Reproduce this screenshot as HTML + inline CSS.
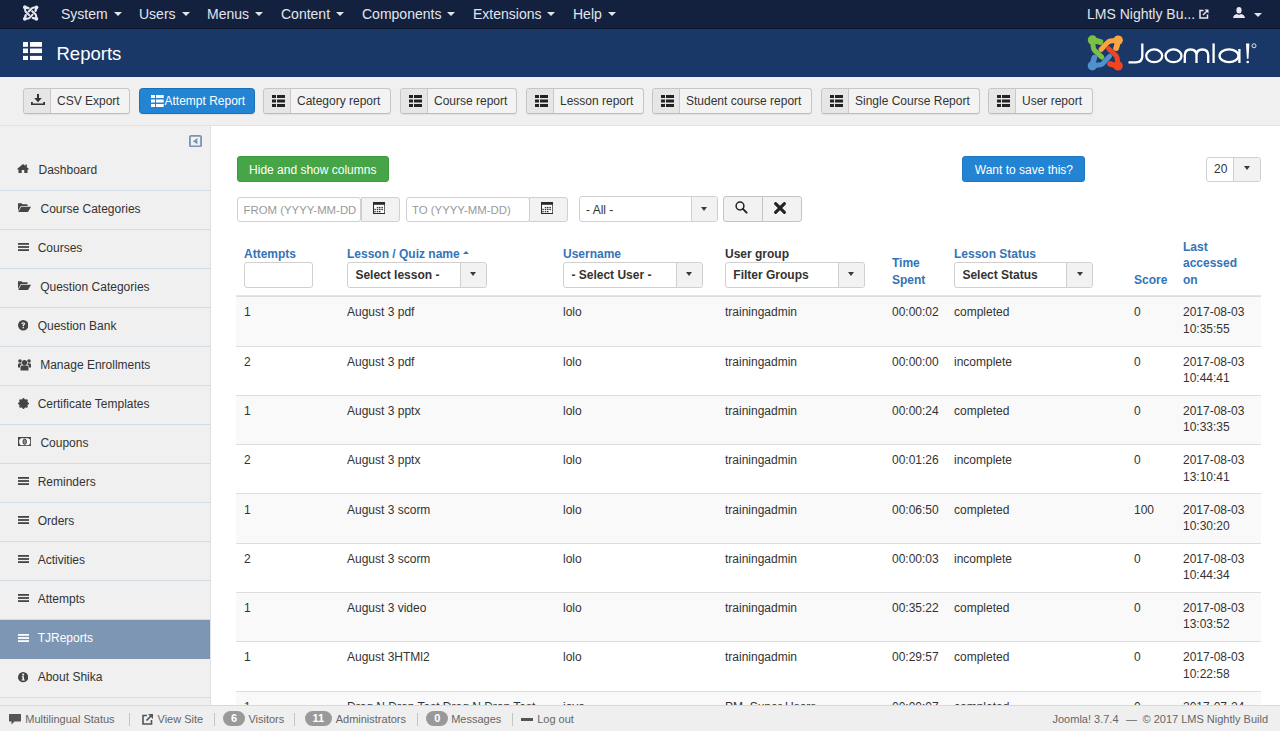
<!DOCTYPE html>
<html><head><meta charset="utf-8">
<style>
*{box-sizing:border-box;}
html,body{margin:0;padding:0;width:1280px;height:731px;overflow:hidden;background:#fff;}
body{font-family:"Liberation Sans",sans-serif;font-size:12px;color:#333;position:relative;}
.abs{position:absolute;}
/* navbar */
#nav{position:absolute;left:0;top:0;width:1280px;height:29px;background:#13213f;border-bottom:1px solid #0d1528;}
#nav .it{position:absolute;top:6px;font-size:14px;color:#e2e5eb;line-height:16px;white-space:nowrap;}
.caret{display:inline-block;width:0;height:0;border-top:4px solid #e2e5eb;border-left:4px solid transparent;border-right:4px solid transparent;vertical-align:middle;margin-left:6px;margin-top:-2px;}
/* header */
#hdr{position:absolute;left:0;top:29px;width:1280px;height:48px;background:#1a3867;}
#hdr .title{position:absolute;left:56.5px;top:13.5px;font-size:18.5px;color:#fff;line-height:22px;}
/* subhead */
#sub{position:absolute;left:0;top:77px;width:1280px;height:49px;background:#f0f0f0;border-bottom:1px solid #e2e2e2;}
.tb{position:absolute;top:11px;height:25.5px;border:1px solid #c6c6c6;border-bottom-color:#bdbdbd;border-radius:3.5px;background:#f3f3f3;font-size:12px;color:#333;line-height:23px;white-space:nowrap;box-shadow:0 1px 1px rgba(0,0,0,.06);}
.tb .ic{position:absolute;left:0;top:0;width:27px;height:23.5px;background:#e6e6e6;border-right:1px solid #c9c9c9;border-radius:3px 0 0 3px;}
.tb .tx{position:absolute;left:33px;top:1px;}
/* sidebar */
#side{position:absolute;left:0;top:126px;width:211px;height:579px;background:#f0f0f0;border-right:1px solid #e0e0e0;}
.si{position:absolute;left:0;width:210px;height:39px;border-bottom:1px solid #d3dbe4;font-size:12px;color:#333;line-height:14px;}
.si .t{position:absolute;top:10.5px;}
.si.act{background:#7d96b4;color:#fff;border-bottom-color:#7d96b4;}
/* main */
.btn{position:absolute;height:26px;border-radius:3px;font-size:12px;line-height:26px;text-align:center;color:#fff;}
.inp{position:absolute;height:27px;border:1px solid #d0d0d0;border-radius:3px;background:#fff;font-size:12px;color:#999;line-height:25px;}
.addon{position:absolute;top:-1px;height:27px;width:40px;border:1px solid #d0d0d0;background:#f2f2f2;border-radius:0 3px 3px 0;}
/* table */
.th{position:absolute;font-weight:bold;color:#3374b8;font-size:12px;line-height:16.6px;white-space:nowrap;margin-top:0.7px;}
.sel{position:absolute;top:262px;height:26px;border:1px solid #d0d0d0;border-radius:3px;background:#fff;font-weight:bold;color:#333;font-size:12px;line-height:24px;}
.sel .t{position:absolute;left:7px;top:0;}
.sel .dd{position:absolute;right:0;top:0;width:26px;height:24px;background:#f2f2f2;border-left:1px solid #d0d0d0;border-radius:0 3px 3px 0;}
.dcaret{position:absolute;left:9.6px;top:9.2px;width:0;height:0;border-top:4.1px solid #3a3a3a;border-left:3.4px solid transparent;border-right:3.4px solid transparent;}
.row{position:absolute;left:236px;width:1025px;border-top:1px solid #ddd;}
.row.odd{background:#f9f9f9;}
.c{position:absolute;top:8px;line-height:16.4px;font-size:12px;color:#333;white-space:nowrap;}
/* footer */
#foot{position:absolute;left:0;top:705px;width:1280px;height:26px;background:#efefef;border-top:1px solid #d9d9d9;font-size:11px;color:#666;line-height:24px;}
#foot .f{position:absolute;top:0.5px;white-space:nowrap;}
.badge{position:absolute;top:4.5px;background:#999;color:#fff;border-radius:8px;font-size:11px;font-weight:bold;line-height:15.7px;height:15.7px;text-align:center;}
.sep{position:absolute;top:7px;width:1px;height:12.5px;background:#c4c4c4;}
.sbtn{position:absolute;top:196px;height:26px;border:1px solid #c4c4c4;border-radius:3px 0 0 3px;background:#f2f2f2;}
.upc{display:inline-block;width:0;height:0;border-bottom:3.6px solid #3374b8;border-left:3.3px solid transparent;border-right:3.3px solid transparent;vertical-align:middle;margin-left:3.5px;margin-top:-5px;}

</style></head><body>

<div id="nav">
  <svg class="abs" style="left:0;top:0" width="60" height="28" viewBox="0 0 60 28"><path d="M24.89 7.25 L25.29 10.71 Q25.47 11.52 26.06 12.11 L29.12 14.94" fill="none" stroke="#e6e8ee" stroke-width="2.07" stroke-linecap="round" stroke-linejoin="round"/><path d="M24.89 7.25 Q27.27 7.70 28.49 8.14" fill="none" stroke="#e6e8ee" stroke-width="2.38" stroke-linecap="round"/><circle cx="24.89" cy="7.25" r="1.89" fill="#e6e8ee"/><path d="M36.45 7.29 L32.99 7.70 Q32.18 7.88 31.59 8.46 L28.76 11.52" fill="none" stroke="#e6e8ee" stroke-width="2.07" stroke-linecap="round" stroke-linejoin="round"/><path d="M36.45 7.29 Q36.00 9.68 35.55 10.89" fill="none" stroke="#e6e8ee" stroke-width="2.38" stroke-linecap="round"/><circle cx="36.45" cy="7.29" r="1.89" fill="#e6e8ee"/><path d="M36.41 18.86 L36.00 15.39 Q35.82 14.58 35.24 14.00 L32.18 11.16" fill="none" stroke="#e6e8ee" stroke-width="2.07" stroke-linecap="round" stroke-linejoin="round"/><path d="M36.41 18.86 Q34.02 18.41 32.81 17.96" fill="none" stroke="#e6e8ee" stroke-width="2.38" stroke-linecap="round"/><circle cx="36.41" cy="18.86" r="1.89" fill="#e6e8ee"/><path d="M24.84 18.81 L28.31 18.41 Q29.12 18.23 29.70 17.64 L32.54 14.58" fill="none" stroke="#e6e8ee" stroke-width="2.07" stroke-linecap="round" stroke-linejoin="round"/><path d="M24.84 18.81 Q25.29 16.43 25.74 15.21" fill="none" stroke="#e6e8ee" stroke-width="2.38" stroke-linecap="round"/><circle cx="24.84" cy="18.81" r="1.89" fill="#e6e8ee"/></svg>
  <div class="it" style="left:61px;">System<span class="caret"></span></div>
  <div class="it" style="left:139px;">Users<span class="caret"></span></div>
  <div class="it" style="left:207px;">Menus<span class="caret"></span></div>
  <div class="it" style="left:281px;">Content<span class="caret"></span></div>
  <div class="it" style="left:362px;">Components<span class="caret"></span></div>
  <div class="it" style="left:473px;">Extensions<span class="caret"></span></div>
  <div class="it" style="left:573px;">Help<span class="caret"></span></div>
  <div class="it" style="left:1087px;">LMS Nightly Bu...</div>
  <svg class="abs" style="left:1198.5px;top:8.8px" width="10" height="10" viewBox="0 0 10 10"><path d="M4.5 1.5 H1 V9 H8.5 V5.5" fill="none" stroke="#e6e8ee" stroke-width="1.5"/><path d="M5.5 0.5 H9.5 V4.5 Z" fill="#e6e8ee"/><path d="M8.5 1.5 L4 6" stroke="#e6e8ee" stroke-width="1.5"/></svg>
  <svg class="abs" style="left:1233px;top:7px" width="12" height="11" viewBox="0 0 12 11" fill="#e6e8ee"><ellipse cx="6" cy="3.3" rx="2.6" ry="3.3"/><path d="M0 11 Q0.5 7.5 4 7 L6 8 L8 7 Q11.5 7.5 12 11 Z"/></svg>
  <span class="caret abs" style="left:1254px;top:13px;margin:0;"></span>
</div>

<div id="hdr">
  <svg class="abs" style="left:23px;top:12.8px" width="19.3" height="18.7" viewBox="0 0 19.3 18.7" fill="#fff">
    <rect x="0" y="0" width="5" height="4.8"/><rect x="7" y="0" width="12.3" height="4.8"/>
    <rect x="0" y="6.5" width="5" height="4.6"/><rect x="7" y="6.5" width="12.3" height="4.6"/>
    <rect x="0" y="13.9" width="5" height="4.8"/><rect x="7" y="13.9" width="12.3" height="4.8"/>
  </svg>
  <div class="title">Reports</div>
  <svg class="abs" style="left:1080px;top:0px" width="190" height="48" viewBox="1080 29 190 48">
<path d="M1092.45 40.05 L1093.35 47.75 Q1093.75 49.55 1095.05 50.85 L1101.85 57.15" fill="none" stroke="#7ac143" stroke-width="5.00" stroke-linecap="round" stroke-linejoin="round"/><path d="M1092.45 40.05 Q1097.75 41.05 1100.45 42.05" fill="none" stroke="#7ac143" stroke-width="5.75" stroke-linecap="round"/><circle cx="1092.45" cy="40.05" r="4.70" fill="#7ac143"/><path d="M1118.15 40.15 L1110.45 41.05 Q1108.65 41.45 1107.35 42.75 L1101.05 49.55" fill="none" stroke="#f9a541" stroke-width="5.00" stroke-linecap="round" stroke-linejoin="round"/><path d="M1118.15 40.15 Q1117.15 45.45 1116.15 48.15" fill="none" stroke="#f9a541" stroke-width="5.75" stroke-linecap="round"/><circle cx="1118.15" cy="40.15" r="4.70" fill="#f9a541"/><path d="M1118.05 65.85 L1117.15 58.15 Q1116.75 56.35 1115.45 55.05 L1108.65 48.75" fill="none" stroke="#f44321" stroke-width="5.00" stroke-linecap="round" stroke-linejoin="round"/><path d="M1118.05 65.85 Q1112.75 64.85 1110.05 63.85" fill="none" stroke="#f44321" stroke-width="5.75" stroke-linecap="round"/><circle cx="1118.05" cy="65.85" r="4.70" fill="#f44321"/><path d="M1092.35 65.75 L1100.05 64.85 Q1101.85 64.45 1103.15 63.15 L1109.45 56.35" fill="none" stroke="#5091cd" stroke-width="5.00" stroke-linecap="round" stroke-linejoin="round"/><path d="M1092.35 65.75 Q1093.35 60.45 1094.35 57.75" fill="none" stroke="#5091cd" stroke-width="5.75" stroke-linecap="round"/><circle cx="1092.35" cy="65.75" r="4.70" fill="#5091cd"/>
<g fill="none" stroke="#fff" stroke-width="2.3">
<path d="M1142.3 43.5 V56 Q1142.3 62.3 1136 62.3 H1128.5"/>
<ellipse cx="1154.2" cy="55.8" rx="8" ry="6.4"/>
<ellipse cx="1173.5" cy="55.8" rx="8" ry="6.4"/>
<path d="M1184.8 63 V55.5 Q1184.8 49.5 1190.6 49.5 Q1196.5 49.5 1196.5 55.5 V63 M1196.5 55.5 Q1196.5 49.5 1202.3 49.5 Q1208.2 49.5 1208.2 55.5 V63"/>
<path d="M1213.6 43.4 V63"/>
<ellipse cx="1229" cy="55.8" rx="9.5" ry="6.4"/>
<path d="M1239.4 49 V63"/>

<circle cx="1254" cy="45.8" r="2" stroke-width="1" stroke="#dfe5ee"/>
</g>
<circle cx="1247.7" cy="62" r="1.3" fill="#fff"/><path d="M1246 43.4 H1249.4 L1248.5 58.8 H1246.9 Z" fill="#fff"/>
</svg>
</div>
<div id="sub"><div class="tb" style="left:23px;width:107px;"><div class="ic"><svg class="abs" style="left:7px;top:5px" width="14" height="12" viewBox="0 0 14 12" fill="#333"><rect x="6" y="0" width="2" height="5"/><path d="M3.2 4 H10.8 L7 8.2 Z"/><path d="M0 8 H1.8 V9.6 H12.2 V8 H14 V11 H0 Z"/></svg></div><div class="tx">CSV Export</div></div><div class="tb" style="left:139px;width:116px;background:#2384d3;border-color:#1d6fb5;color:#fff;"><svg class="abs" style="left:11px;top:5.8px" width="12.7" height="12" viewBox="0 0 12.7 12" fill="#fff"><rect x="0" y="0.00" width="4" height="3"/><rect x="5" y="0.00" width="7.699999999999999" height="3"/><rect x="0" y="4.50" width="4" height="3"/><rect x="5" y="4.50" width="7.699999999999999" height="3"/><rect x="0" y="9.00" width="4" height="3"/><rect x="5" y="9.00" width="7.699999999999999" height="3"/></svg><div class="tx" style="left:24.5px">Attempt Report</div></div><div class="tb" style="left:263px;width:128px;"><div class="ic"><svg class="abs" style="left:7.5px;top:5.8px" width="13" height="12" viewBox="0 0 13 12" fill="#222"><rect x="0" y="0.00" width="4" height="3"/><rect x="5" y="0.00" width="8" height="3"/><rect x="0" y="4.50" width="4" height="3"/><rect x="5" y="4.50" width="8" height="3"/><rect x="0" y="9.00" width="4" height="3"/><rect x="5" y="9.00" width="8" height="3"/></svg></div><div class="tx">Category report</div></div><div class="tb" style="left:400px;width:117px;"><div class="ic"><svg class="abs" style="left:7.5px;top:5.8px" width="13" height="12" viewBox="0 0 13 12" fill="#222"><rect x="0" y="0.00" width="4" height="3"/><rect x="5" y="0.00" width="8" height="3"/><rect x="0" y="4.50" width="4" height="3"/><rect x="5" y="4.50" width="8" height="3"/><rect x="0" y="9.00" width="4" height="3"/><rect x="5" y="9.00" width="8" height="3"/></svg></div><div class="tx">Course report</div></div><div class="tb" style="left:526px;width:118px;"><div class="ic"><svg class="abs" style="left:7.5px;top:5.8px" width="13" height="12" viewBox="0 0 13 12" fill="#222"><rect x="0" y="0.00" width="4" height="3"/><rect x="5" y="0.00" width="8" height="3"/><rect x="0" y="4.50" width="4" height="3"/><rect x="5" y="4.50" width="8" height="3"/><rect x="0" y="9.00" width="4" height="3"/><rect x="5" y="9.00" width="8" height="3"/></svg></div><div class="tx">Lesson report</div></div><div class="tb" style="left:652px;width:160px;"><div class="ic"><svg class="abs" style="left:7.5px;top:5.8px" width="13" height="12" viewBox="0 0 13 12" fill="#222"><rect x="0" y="0.00" width="4" height="3"/><rect x="5" y="0.00" width="8" height="3"/><rect x="0" y="4.50" width="4" height="3"/><rect x="5" y="4.50" width="8" height="3"/><rect x="0" y="9.00" width="4" height="3"/><rect x="5" y="9.00" width="8" height="3"/></svg></div><div class="tx">Student course report</div></div><div class="tb" style="left:821px;width:159px;"><div class="ic"><svg class="abs" style="left:7.5px;top:5.8px" width="13" height="12" viewBox="0 0 13 12" fill="#222"><rect x="0" y="0.00" width="4" height="3"/><rect x="5" y="0.00" width="8" height="3"/><rect x="0" y="4.50" width="4" height="3"/><rect x="5" y="4.50" width="8" height="3"/><rect x="0" y="9.00" width="4" height="3"/><rect x="5" y="9.00" width="8" height="3"/></svg></div><div class="tx">Single Course Report</div></div><div class="tb" style="left:988px;width:105px;"><div class="ic"><svg class="abs" style="left:7.5px;top:5.8px" width="13" height="12" viewBox="0 0 13 12" fill="#222"><rect x="0" y="0.00" width="4" height="3"/><rect x="5" y="0.00" width="8" height="3"/><rect x="0" y="4.50" width="4" height="3"/><rect x="5" y="4.50" width="8" height="3"/><rect x="0" y="9.00" width="4" height="3"/><rect x="5" y="9.00" width="8" height="3"/></svg></div><div class="tx">User report</div></div></div><div id="side"><svg class="abs" style="left:189px;top:8.8px" width="13" height="12.3" viewBox="0 0 13 12.3"><rect x="0.9" y="0.9" width="11.2" height="10.5" rx="1.2" fill="none" stroke="#7a93b5" stroke-width="1.8"/><path d="M3.9 6.15 L8.4 3.1 V9.2 Z" fill="#7a93b5"/></svg><div class="si" style="top:26px;"><svg class="abs" style="left:17px;top:12.2px" width="12" height="9" viewBox="0 0 12 9" fill="#454545"><path d="M6 0 L12 5 L10.8 5.8 L10.5 5.5 V9 H7.3 V6 H4.7 V9 H1.5 V5.5 L1.2 5.8 L0 5 Z"/><rect x="8.3" y="0.5" width="1.6" height="2.5"/></svg><div class="t" style="left:38.5px">Dashboard</div></div><div class="si" style="top:65px;"><svg class="abs" style="left:17.7px;top:11.8px" width="13" height="9" viewBox="0 0 13 9" fill="#454545"><path d="M0 0.3 H3.5 L4.5 1.3 H9.5 V3 H2.8 L0 8 Z"/><path d="M3.2 3.8 H13 L10 9 H0.3 Z"/></svg><div class="t" style="left:40.5px">Course Categories</div></div><div class="si" style="top:104px;"><svg class="abs" style="left:17.7px;top:12.8px" width="11" height="8" viewBox="0 0 11 8" fill="#454545"><rect x="0" y="0" width="11" height="1.8"/><rect x="0" y="3.1" width="11" height="1.8"/><rect x="0" y="6.2" width="11" height="1.8"/></svg><div class="t" style="left:37.7px">Courses</div></div><div class="si" style="top:143px;"><svg class="abs" style="left:17.7px;top:11.8px" width="13" height="9" viewBox="0 0 13 9" fill="#454545"><path d="M0 0.3 H3.5 L4.5 1.3 H9.5 V3 H2.8 L0 8 Z"/><path d="M3.2 3.8 H13 L10 9 H0.3 Z"/></svg><div class="t" style="left:40.2px">Question Categories</div></div><div class="si" style="top:182px;"><svg class="abs" style="left:17.7px;top:12px" width="10.5" height="10.5" viewBox="0 0 10.5 10.5"><circle cx="5.25" cy="5.25" r="5.25" fill="#454545"/><path d="M3.4 4 Q3.4 2.2 5.25 2.2 Q7.1 2.2 7.1 3.8 Q7.1 4.8 5.9 5.3 V6.2 H4.6 V4.8 Q5.8 4.4 5.8 3.8 Q5.8 3.3 5.25 3.3 Q4.7 3.3 4.7 4 Z" fill="#f0f0f0"/><rect x="4.6" y="7" width="1.3" height="1.3" fill="#f0f0f0"/></svg><div class="t" style="left:37.7px">Question Bank</div></div><div class="si" style="top:221px;"><svg class="abs" style="left:17.7px;top:12.2px" width="13" height="11.6" viewBox="0 0 13 11.6" fill="#454545"><circle cx="6.5" cy="3.6" r="2.6"/><circle cx="2" cy="2" r="1.8"/><circle cx="11" cy="2" r="1.8"/><path d="M2.5 11.6 V8.5 Q2.5 6.3 6.5 6.3 Q10.5 6.3 10.5 8.5 V11.6 Z"/><path d="M0 8.5 V5.5 Q0 4.2 2 4.2 Q3.5 4.2 4 5 Q2 6 2 8.5 Z"/><path d="M13 8.5 V5.5 Q13 4.2 11 4.2 Q9.5 4.2 9 5 Q11 6 11 8.5 Z"/></svg><div class="t" style="left:40.2px">Manage Enrollments</div></div><div class="si" style="top:260px;"><svg class="abs" style="left:17.5px;top:11.5px" width="11" height="11" viewBox="0 0 11 11" fill="#454545"><circle cx="5.5" cy="5.5" r="4.6"/><g stroke="#454545" stroke-width="1.6"><path d="M5.5 0 V11 M0 5.5 H11 M1.6 1.6 L9.4 9.4 M9.4 1.6 L1.6 9.4"/></g></svg><div class="t" style="left:37.7px">Certificate Templates</div></div><div class="si" style="top:299px;"><svg class="abs" style="left:17.6px;top:12px" width="13.4" height="9.4" viewBox="0 0 13.4 9.4"><rect x="0.6" y="0.6" width="12.2" height="8.2" fill="#fafafa" stroke="#444" stroke-width="1.2"/><path d="M1 1 H3.2 Q1.2 2.5 1 3.3 Z M12.4 1 H10.2 Q12.2 2.5 12.4 3.3 Z M1 8.4 H3.2 Q1.2 6.9 1 6.1 Z M12.4 8.4 H10.2 Q12.2 6.9 12.4 6.1 Z" fill="#444"/><ellipse cx="6.7" cy="4.7" rx="1.7" ry="2.7" fill="#8a8fa0" stroke="#3a3a3a" stroke-width="1"/></svg><div class="t" style="left:40.4px">Coupons</div></div><div class="si" style="top:338px;"><svg class="abs" style="left:17.7px;top:12.8px" width="11" height="8" viewBox="0 0 11 8" fill="#454545"><rect x="0" y="0" width="11" height="1.8"/><rect x="0" y="3.1" width="11" height="1.8"/><rect x="0" y="6.2" width="11" height="1.8"/></svg><div class="t" style="left:37.7px">Reminders</div></div><div class="si" style="top:377px;"><svg class="abs" style="left:17.7px;top:12.8px" width="11" height="8" viewBox="0 0 11 8" fill="#454545"><rect x="0" y="0" width="11" height="1.8"/><rect x="0" y="3.1" width="11" height="1.8"/><rect x="0" y="6.2" width="11" height="1.8"/></svg><div class="t" style="left:37.7px">Orders</div></div><div class="si" style="top:416px;"><svg class="abs" style="left:17.7px;top:12.8px" width="11" height="8" viewBox="0 0 11 8" fill="#454545"><rect x="0" y="0" width="11" height="1.8"/><rect x="0" y="3.1" width="11" height="1.8"/><rect x="0" y="6.2" width="11" height="1.8"/></svg><div class="t" style="left:37.7px">Activities</div></div><div class="si" style="top:455px;"><svg class="abs" style="left:17.7px;top:12.8px" width="11" height="8" viewBox="0 0 11 8" fill="#454545"><rect x="0" y="0" width="11" height="1.8"/><rect x="0" y="3.1" width="11" height="1.8"/><rect x="0" y="6.2" width="11" height="1.8"/></svg><div class="t" style="left:37.7px">Attempts</div></div><div class="si act" style="top:494px;"><svg class="abs" style="left:17.5px;top:13.5px" width="11" height="8" viewBox="0 0 11 8" fill="#fff"><rect x="0" y="0" width="11" height="1.8"/><rect x="0" y="3.1" width="11" height="1.8"/><rect x="0" y="6.2" width="11" height="1.8"/></svg><div class="t" style="left:37.7px">TJReports</div></div><div class="si" style="top:533px;"><svg class="abs" style="left:17.8px;top:13.3px" width="10.3" height="10.3" viewBox="0 0 10.3 10.3"><circle cx="5.15" cy="5.15" r="5.15" fill="#454545"/><circle cx="5.15" cy="2.6" r="1.1" fill="#f0f0f0"/><path d="M3.6 4.2 H6 V7.6 H6.8 V8.5 H3.6 V7.6 H4.4 V5.1 H3.6 Z" fill="#f0f0f0"/></svg><div class="t" style="left:37.7px">About Shika</div></div></div><!-- MAIN -->
<div class="btn" style="left:236.5px;top:156.3px;width:152.5px;height:25.7px;line-height:26.3px;background:#46a546;border:1px solid #3f9a3f;">Hide and show columns</div>
<div class="btn" style="left:962.4px;top:156.1px;width:123px;height:25.8px;line-height:26.3px;background:#2384d3;border:1px solid #1f78c1;">Want to save this?</div>


<div class="sel" style="left:1206px;top:156.5px;width:55px;height:25px;font-weight:normal;"><div class="t" style="left:7px;top:-0.5px">20</div><div class="dd" style="height:23px;width:26.6px"><div class="dcaret" style="left:9.8px;top:8.3px"></div></div></div>

<!-- FILTERS -->
<div class="inp" style="left:237px;top:196.5px;width:124px;height:25px;"><div class="t" style="position:absolute;left:5.5px;top:0.5px;overflow:hidden;width:112px;white-space:nowrap;font-size:11.4px;">FROM (YYYY-MM-DD)</div></div>
<div class="addon" style="left:360.5px;top:196.5px;width:39px;height:25px;">
<svg class="abs" style="left:11px;top:4.4px" width="12.3" height="12" viewBox="0 0 12.3 12"><rect x="0.5" y="0.5" width="11.3" height="11" fill="#fdfdfd" stroke="#2a2a2a" stroke-width="1"/><rect x="0" y="0" width="12.3" height="2.8" fill="#2a2a2a"/><g fill="#333"><rect x="3.8" y="4.9" width="1.5" height="1.3"/><rect x="6.0" y="4.9" width="1.5" height="1.3"/><rect x="8.4" y="4.9" width="1.5" height="1.3"/><rect x="1.3" y="6.8" width="1.5" height="1.3"/><rect x="3.8" y="6.8" width="1.5" height="1.3"/><rect x="6.0" y="6.8" width="1.5" height="1.3"/><rect x="8.4" y="6.8" width="1.5" height="1.3"/><rect x="1.3" y="9.0" width="1.5" height="1.3"/><rect x="3.8" y="9.0" width="1.5" height="1.3"/><rect x="6.0" y="9.0" width="1.5" height="1.3"/></g></svg></div>
<div class="inp" style="left:405.5px;top:196.5px;width:124px;height:25px;"><div class="t" style="position:absolute;left:5.5px;top:0.5px;white-space:nowrap;font-size:11.4px;">TO (YYYY-MM-DD)</div></div>
<div class="addon" style="left:529px;top:196.5px;width:39px;height:25px;">
<svg class="abs" style="left:11px;top:4.4px" width="12.3" height="12" viewBox="0 0 12.3 12"><rect x="0.5" y="0.5" width="11.3" height="11" fill="#fdfdfd" stroke="#2a2a2a" stroke-width="1"/><rect x="0" y="0" width="12.3" height="2.8" fill="#2a2a2a"/><g fill="#333"><rect x="3.8" y="4.9" width="1.5" height="1.3"/><rect x="6.0" y="4.9" width="1.5" height="1.3"/><rect x="8.4" y="4.9" width="1.5" height="1.3"/><rect x="1.3" y="6.8" width="1.5" height="1.3"/><rect x="3.8" y="6.8" width="1.5" height="1.3"/><rect x="6.0" y="6.8" width="1.5" height="1.3"/><rect x="8.4" y="6.8" width="1.5" height="1.3"/><rect x="1.3" y="9.0" width="1.5" height="1.3"/><rect x="3.8" y="9.0" width="1.5" height="1.3"/><rect x="6.0" y="9.0" width="1.5" height="1.3"/></g></svg></div>
<div class="sel" style="left:578.5px;top:196px;width:139px;height:26px;font-weight:normal;"><div class="t" style="left:6.5px;top:0.5px">- All -</div><div class="dd" style="width:26px;height:24px"><div class="dcaret" style="top:9.5px"></div></div></div>
<div class="sbtn" style="left:722.5px;width:40px;">
<svg class="abs" style="left:11px;top:4.3px" width="14" height="14" viewBox="0 0 14 14"><circle cx="5" cy="5" r="3.9" fill="none" stroke="#222" stroke-width="1.5"/><path d="M7.9 7.9 L11.6 11.6" stroke="#222" stroke-width="2" stroke-linecap="round"/></svg></div>
<div class="sbtn" style="left:761.5px;width:40.5px;border-radius:0 3px 3px 0;">
<svg class="abs" style="left:10.3px;top:3.6px" width="14" height="14" viewBox="0 0 14 14"><path d="M2.6 2.6 L11.4 11.4 M11.4 2.6 L2.6 11.4" stroke="#222" stroke-width="3.1" stroke-linecap="round"/></svg></div>

<!-- TABLE HEADER -->
<div class="th" style="left:244px;top:245px;">Attempts</div>
<div class="inp" style="left:244.3px;top:262.2px;width:68.5px;height:25.5px;"></div>
<div class="th" style="left:347px;top:245px;">Lesson / Quiz name<span class="upc"></span></div>
<div class="sel" style="left:347.4px;width:139.2px;"><div class="t">Select lesson -</div><div class="dd"><div class="dcaret"></div></div></div>
<div class="th" style="left:563px;top:245px;">Username</div>
<div class="sel" style="left:563.4px;width:139.3px;"><div class="t">- Select User -</div><div class="dd"><div class="dcaret"></div></div></div>
<div class="th" style="left:725px;top:245px;color:#333;">User group</div>
<div class="sel" style="left:725.3px;width:139.3px;"><div class="t">Filter Groups</div><div class="dd"><div class="dcaret"></div></div></div>
<div class="th" style="left:892px;top:254.3px;">Time<br>Spent</div>
<div class="th" style="left:954px;top:245px;">Lesson Status</div>
<div class="sel" style="left:954.4px;width:139px;"><div class="t">Select Status</div><div class="dd"><div class="dcaret"></div></div></div>
<div class="th" style="left:1134px;top:271px;">Score</div>
<div class="th" style="left:1183px;top:238px;">Last<br>accessed<br>on</div>
<div class="abs" style="left:236px;top:295px;width:1025px;height:2px;background:#e6e6e6;"></div>
<div class="row odd" style="top:296.30px;height:49.77px;"></div>
<div class="c" style="left:244px;top:304.40px;">1</div>
<div class="c" style="left:347px;top:304.40px;">August 3 pdf</div>
<div class="c" style="left:563px;top:304.40px;">lolo</div>
<div class="c" style="left:725px;top:304.40px;">trainingadmin</div>
<div class="c" style="left:892px;top:304.40px;">00:00:02</div>
<div class="c" style="left:954px;top:304.40px;">completed</div>
<div class="c" style="left:1134px;top:304.40px;">0</div>
<div class="c" style="left:1183px;top:304.40px;">2017-08-03<br>10:35:55</div>
<div class="row" style="top:345.57px;height:49.77px;"></div>
<div class="c" style="left:244px;top:353.68px;">2</div>
<div class="c" style="left:347px;top:353.68px;">August 3 pdf</div>
<div class="c" style="left:563px;top:353.68px;">lolo</div>
<div class="c" style="left:725px;top:353.68px;">trainingadmin</div>
<div class="c" style="left:892px;top:353.68px;">00:00:00</div>
<div class="c" style="left:954px;top:353.68px;">incomplete</div>
<div class="c" style="left:1134px;top:353.68px;">0</div>
<div class="c" style="left:1183px;top:353.68px;">2017-08-03<br>10:44:41</div>
<div class="row odd" style="top:394.85px;height:49.77px;"></div>
<div class="c" style="left:244px;top:402.95px;">1</div>
<div class="c" style="left:347px;top:402.95px;">August 3 pptx</div>
<div class="c" style="left:563px;top:402.95px;">lolo</div>
<div class="c" style="left:725px;top:402.95px;">trainingadmin</div>
<div class="c" style="left:892px;top:402.95px;">00:00:24</div>
<div class="c" style="left:954px;top:402.95px;">completed</div>
<div class="c" style="left:1134px;top:402.95px;">0</div>
<div class="c" style="left:1183px;top:402.95px;">2017-08-03<br>10:33:35</div>
<div class="row" style="top:444.12px;height:49.77px;"></div>
<div class="c" style="left:244px;top:452.23px;">2</div>
<div class="c" style="left:347px;top:452.23px;">August 3 pptx</div>
<div class="c" style="left:563px;top:452.23px;">lolo</div>
<div class="c" style="left:725px;top:452.23px;">trainingadmin</div>
<div class="c" style="left:892px;top:452.23px;">00:01:26</div>
<div class="c" style="left:954px;top:452.23px;">incomplete</div>
<div class="c" style="left:1134px;top:452.23px;">0</div>
<div class="c" style="left:1183px;top:452.23px;">2017-08-03<br>13:10:41</div>
<div class="row odd" style="top:493.40px;height:49.77px;"></div>
<div class="c" style="left:244px;top:501.50px;">1</div>
<div class="c" style="left:347px;top:501.50px;">August 3 scorm</div>
<div class="c" style="left:563px;top:501.50px;">lolo</div>
<div class="c" style="left:725px;top:501.50px;">trainingadmin</div>
<div class="c" style="left:892px;top:501.50px;">00:06:50</div>
<div class="c" style="left:954px;top:501.50px;">completed</div>
<div class="c" style="left:1134px;top:501.50px;">100</div>
<div class="c" style="left:1183px;top:501.50px;">2017-08-03<br>10:30:20</div>
<div class="row" style="top:542.67px;height:49.77px;"></div>
<div class="c" style="left:244px;top:550.77px;">2</div>
<div class="c" style="left:347px;top:550.77px;">August 3 scorm</div>
<div class="c" style="left:563px;top:550.77px;">lolo</div>
<div class="c" style="left:725px;top:550.77px;">trainingadmin</div>
<div class="c" style="left:892px;top:550.77px;">00:00:03</div>
<div class="c" style="left:954px;top:550.77px;">incomplete</div>
<div class="c" style="left:1134px;top:550.77px;">0</div>
<div class="c" style="left:1183px;top:550.77px;">2017-08-03<br>10:44:34</div>
<div class="row odd" style="top:591.95px;height:49.77px;"></div>
<div class="c" style="left:244px;top:600.05px;">1</div>
<div class="c" style="left:347px;top:600.05px;">August 3 video</div>
<div class="c" style="left:563px;top:600.05px;">lolo</div>
<div class="c" style="left:725px;top:600.05px;">trainingadmin</div>
<div class="c" style="left:892px;top:600.05px;">00:35:22</div>
<div class="c" style="left:954px;top:600.05px;">completed</div>
<div class="c" style="left:1134px;top:600.05px;">0</div>
<div class="c" style="left:1183px;top:600.05px;">2017-08-03<br>13:03:52</div>
<div class="row" style="top:641.23px;height:49.77px;"></div>
<div class="c" style="left:244px;top:649.33px;">1</div>
<div class="c" style="left:347px;top:649.33px;">August 3HTMl2</div>
<div class="c" style="left:563px;top:649.33px;">lolo</div>
<div class="c" style="left:725px;top:649.33px;">trainingadmin</div>
<div class="c" style="left:892px;top:649.33px;">00:29:57</div>
<div class="c" style="left:954px;top:649.33px;">completed</div>
<div class="c" style="left:1134px;top:649.33px;">0</div>
<div class="c" style="left:1183px;top:649.33px;">2017-08-03<br>10:22:58</div>
<div class="row odd" style="top:690.50px;height:49.77px;"></div>
<div class="c" style="left:244px;top:698.60px;">1</div>
<div class="c" style="left:347px;top:698.60px;">Drag N Drop Test Drag N Drop Test</div>
<div class="c" style="left:563px;top:698.60px;">jaya</div>
<div class="c" style="left:725px;top:698.60px;">PM, Super Users</div>
<div class="c" style="left:892px;top:698.60px;">00:00:07</div>
<div class="c" style="left:954px;top:698.60px;">completed</div>
<div class="c" style="left:1134px;top:698.60px;">0</div>
<div class="c" style="left:1183px;top:698.60px;">2017-07-24<br>10:00:00</div><div id="foot">
  <svg class="abs" style="left:9px;top:7.5px" width="12" height="11" viewBox="0 0 12 11" fill="#555"><path d="M0.5 0 H11.5 Q12 0 12 0.5 V7 Q12 7.5 11.5 7.5 H5.5 L2.5 10.5 V7.5 H0.5 Q0 7.5 0 7 V0.5 Q0 0 0.5 0 Z"/></svg>
  <div class="f" style="left:25.3px">Multilingual Status</div>
  <div class="sep" style="left:128.5px"></div>
  <svg class="abs" style="left:141.8px;top:7.5px" width="11" height="11" viewBox="0 0 11 11"><path d="M5 1.5 H1 V10 H9.5 V6" fill="none" stroke="#555" stroke-width="1.6"/><path d="M6 0 H11 V5 Z" fill="#555"/><path d="M9.5 1.5 L4.5 6.5" stroke="#555" stroke-width="1.7"/></svg>
  <div class="f" style="left:157.5px">View Site</div>
  <div class="sep" style="left:213.5px"></div>
  <div class="badge" style="left:223.1px;width:21.8px">6</div>
  <div class="f" style="left:248.4px">Visitors</div>
  <div class="sep" style="left:294.3px"></div>
  <div class="badge" style="left:304.5px;width:27.7px">11</div>
  <div class="f" style="left:335.7px">Administrators</div>
  <div class="sep" style="left:416.5px"></div>
  <div class="badge" style="left:426.4px;width:21.8px">0</div>
  <div class="f" style="left:451.2px">Messages</div>
  <div class="sep" style="left:511.5px"></div>
  <div class="abs" style="left:520.8px;top:11.5px;width:11.8px;height:3px;background:#555"></div>
  <div class="f" style="left:537.2px">Log out</div>
  <div class="f" style="left:1052.5px">Joomla! 3.7.4</div>
  <div class="f" style="left:1126px">—</div>
  <div class="f" style="left:1142.5px">© 2017 LMS Nightly Build</div>
</div>

</body></html>
